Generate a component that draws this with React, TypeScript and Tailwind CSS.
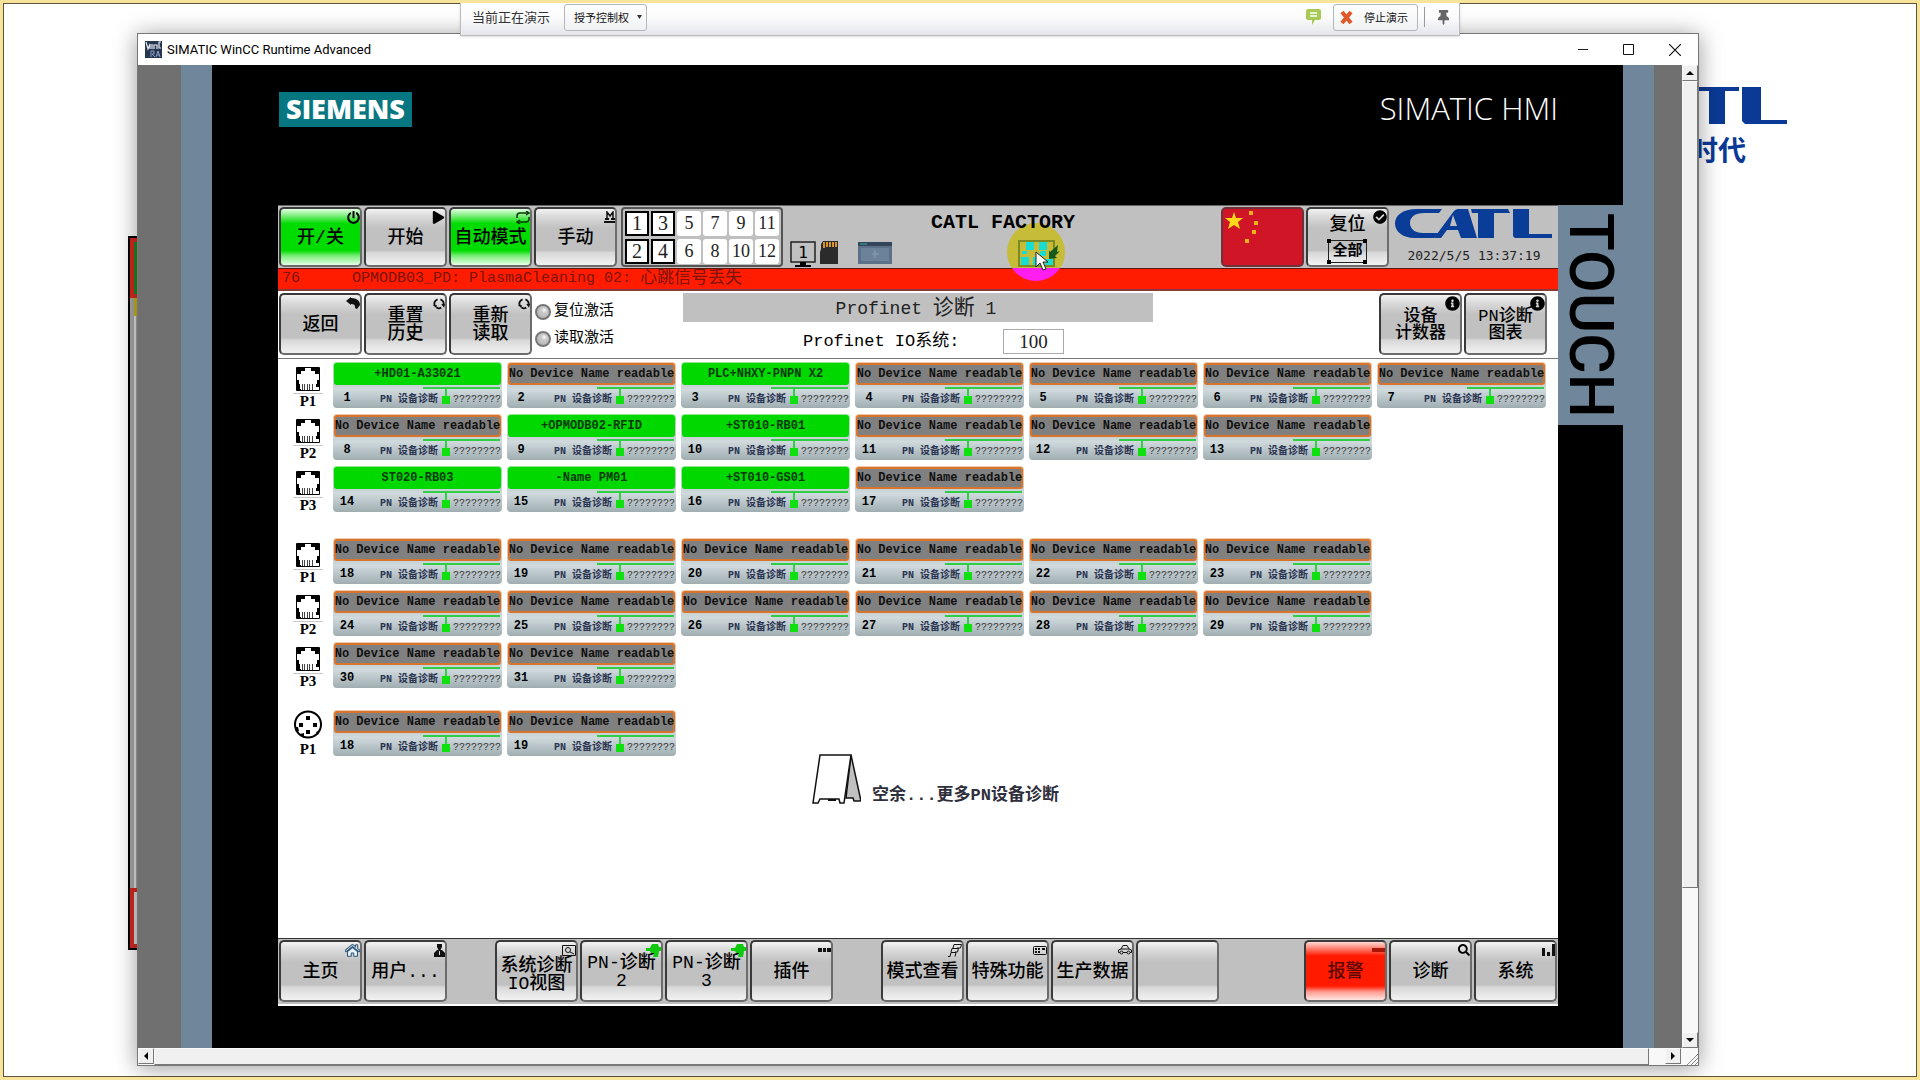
import type { ReactNode } from "react";
import { clsx } from "clsx";
import { FaPowerOff, FaPlay, FaSearch, FaCheckCircle, FaInfoCircle, FaThumbtack, FaHome } from "react-icons/fa";

const EMPTY = "No Device Name readable";

type Row = { port: string; first: number; names: string[]; round?: boolean };

const groups: Row[][] = [
  [
    { port: "P1", first: 1, names: ["+HD01-A33021", EMPTY, "PLC+NHXY-PNPN X2", EMPTY, EMPTY, EMPTY, EMPTY] },
    { port: "P2", first: 8, names: [EMPTY, "+OPMODB02-RFID", "+ST010-RB01", EMPTY, EMPTY, EMPTY] },
    { port: "P3", first: 14, names: ["ST020-RB03", "-Name PM01", "+ST010-GS01", EMPTY] },
  ],
  [
    { port: "P1", first: 18, names: [EMPTY, EMPTY, EMPTY, EMPTY, EMPTY, EMPTY] },
    { port: "P2", first: 24, names: [EMPTY, EMPTY, EMPTY, EMPTY, EMPTY, EMPTY] },
    { port: "P3", first: 30, names: [EMPTY, EMPTY] },
  ],
  [{ port: "P1", first: 18, names: [EMPTY, EMPTY], round: true }],
];

const stations = [1, 3, 5, 7, 9, 11, 2, 4, 6, 8, 10, 12];

const tones = {
  gray: "bg-[linear-gradient(#f2f2f2,#dcdcdc_12%,#c1c1c1_34%,#c1c1c1_74%,#d8d8d8_78%,#f2f2f2)]",
  green: "bg-[linear-gradient(#e4ffe4,#7cee7c_12%,#00dc00_26%,#00dc00_74%,#7cee7c_84%,#e8ffe8)]",
  red: "bg-[linear-gradient(#ffd9d4,#ff8a7c_10%,#ff1a00_24%,#ff1a00_76%,#ff9d92_86%,#ffe6e2)]",
};

type KeyProps = { children?: ReactNode; icon?: ReactNode; tone?: keyof typeof tones; small?: boolean; label?: string };

const Key = ({ children, icon, tone = "gray", small, label }: KeyProps) => (
  <button
    aria-label={label}
    className={clsx(
      "relative flex h-full w-[83px] shrink-0 flex-col items-center justify-center whitespace-nowrap rounded-[5px] border-2 border-[#3a3a3a] border-r-[#6c6c6c] border-b-[#6c6c6c] pt-[2px] text-center font-medium text-black",
      small ? "text-[17px] leading-[17px]" : "text-[18px] leading-[18px]",
      tones[tone]
    )}
  >
    {children}
    {icon && <span className="absolute right-0 top-0 flex h-4 items-center justify-end">{icon}</span>}
  </button>
);

const LoopIcon = () => (
  <svg width="14" height="13" viewBox="0 0 14 13" fill="none" stroke="#0a3a0a" strokeWidth="1.5">
    <path d="M1 7V5q0-3 3-3h9M13 6v2q0 3-3 3H1" />
    <path d="M10 0l3 2-3 2M4 9l-3 2 3 2" />
  </svg>
);

const ResetIcon = () => (
  <svg width="12" height="13" viewBox="0 0 13 13" fill="none" stroke="#111" strokeWidth="2">
    <path d="M2 9A5 5 0 0 1 5 2M8 2a5 5 0 0 1 3 7M9 11a5 5 0 0 1-5 0" />
    <path d="M0 8h4v4zM9 7h4l-1 4z" fill="#111" stroke="none" />
  </svg>
);

const BackIcon = () => (
  <svg width="14" height="12" viewBox="0 0 14 12">
    <path d="M0 4L5 0v1c6 0 9 3 9 7l-3 4c-1 0-2-1-2-2 0-2-1-3-4-3v1z" fill="#111" />
  </svg>
);

const ManualIcon = () => (
  <svg width="11" height="12" viewBox="0 0 11 12" fill="none" stroke="#111">
    <path d="M3 8V1l3 4 3-4v7" strokeWidth="1.500" />
    <path d="M1 8h4M7 8h4M0 11h11" strokeWidth="2" />
  </svg>
);

const NetIcon = () => (
  <svg width="15" height="13" viewBox="0 0 15 13" fill="#10c810">
    <path d="M0 4h4l2-4h6l1 3h2v4h-2l-1 6H7l1-4H5L4 7H0z" />
  </svg>
);

const UserIcon = () => (
  <svg width="11" height="13" viewBox="0 0 11 13" fill="#111">
    <path d="M3 0h5v3L6.500 6H8l3 3v4H0V9l3-3h1.500L3 3z" />
    <path d="M5 7h1v4H5z" fill="#ddd" />
  </svg>
);

const ViewIcon = () => (
  <svg width="14" height="11" viewBox="0 0 14 11" fill="none" stroke="#111">
    <path d="M.5.5h13v10H.5zM8 7l4 2" />
    <circle cx="6" cy="5" r="2.5" />
  </svg>
);

const DotsIcon = () => (
  <svg width="13" height="4" viewBox="0 0 13 4" fill="#111">
    <path d="M0 0h4v4H0zM5 0h3v4H5zM9 0h4v4H9z" />
  </svg>
);

const LayersIcon = () => (
  <svg width="14" height="13" viewBox="0 0 14 13" fill="none" stroke="#111">
    <path d="M5 4L6 .5h7.500L12.500 4H9M3 8l1-3.500h6.500l-1 3.500H7M0 12.500h2L3 8.500h5l-1 4" />
  </svg>
);

const PadIcon = () => (
  <svg width="14" height="9" viewBox="0 0 14 9" fill="none" stroke="#111">
    <rect x=".5" y=".5" width="13" height="8" rx="1" />
    <path d="M2 3h2m1 0h2m2 0h3M2 6h2m1 0h2" strokeWidth="2" />
  </svg>
);

const CarIcon = () => (
  <svg width="14" height="10" viewBox="0 0 14 10" fill="none" stroke="#111">
    <path d="M2 7.500H.5V5L3 4l2-3.500h4L11 4l2.500 1v2.500H12M5 7.500h4M3 4h8" />
    <circle cx="3.500" cy="7.500" r="1.500" />
    <circle cx="10.500" cy="7.500" r="1.500" />
  </svg>
);

const BarsIcon = () => (
  <svg width="13" height="12" viewBox="0 0 13 12" fill="#111">
    <path d="M0 4h3v8H0zM5 8h3v4H5zM10 0h3v12h-3z" />
  </svg>
);

const CatlLogo = () => (
  <svg width="158" height="29" viewBox="0 0 158 29" fill="#0a3d97" role="img" aria-label="CATL">
    <path d="M47 0H22C7 0 0 7 0 14.500S7 29 20 29h19l5-5H28c-8 0-13-4-13-10S20 4 29 4h15z" />
    <path fillRule="evenodd" d="M39 29L59 2q2-2 4-2h10l9 29H66l-3-8H52l-6 8zM55 17h7l-4-11z" />
    <path d="M76 0h37l2 4h-16v25H83V4h-6z" />
    <path d="M118 0h16v25h23v4h-36q-3 0-3-3z" />
  </svg>
);

const Rj45 = () => (
  <svg width="24" height="24" viewBox="0 0 24 24" fill="#000">
    <path d="M.5.5h23v23H.5z" fill="#fff" stroke="#000" />
    <path d="M1 1h8v3H5v3H1zM15 1h8v6h-4V4h-4zM1 13h2v4h1v5h1v1H1zM23 13h-2v4h-1v3h3z" />
    <path d="M6.500 17v6M8.500 17v6M11.500 17v6M13.500 17v6M16.500 17v6" stroke="#444" />
  </svg>
);

const M12 = () => (
  <svg width="30" height="29" viewBox="0 0 30 29">
    <circle cx="15" cy="14.500" r="13" fill="#fff" stroke="#000" strokeWidth="2" />
    <path d="M13 6h4v4h-4zM6 13h4v4H6zM20 13h4v4h-4zM13 20h4v4h-4zM2 17h3l1 4-3 1zM7 24l4-1v5zM23 22l4-2-2 5z" />
  </svg>
);

const Tile = ({ no, name }: { no: number; name: string }) => {
  const empty = name === EMPTY;
  return (
    <div className={clsx("flex h-full w-[169px] shrink-0 flex-col rounded-[4px] p-px", empty ? "bg-[linear-gradient(#f0c8a4,#c4ced1_45%,#d0dadd_60%,#9fadb1)]" : "bg-[linear-gradient(#8ee88e,#c4ced1_45%,#d0dadd_60%,#9fadb1)]")}>
      <div
        className={clsx(
          "flex h-[22px] items-center justify-center whitespace-nowrap rounded-[3px] border-2 text-[12px] font-bold leading-none",
          empty ? "border-[#d8742c] bg-[#808080] text-[#101010]" : "border-[#00d800] bg-[#00d800] text-[#06380a]"
        )}
      >
        {name}
      </div>
      <div className="flex flex-1 items-end pb-px">
        <span className="w-[26px] pb-[2px] text-center text-[12px] font-bold leading-[12px]">{no}</span>
        <span className="ml-auto whitespace-pre text-[10px] font-bold leading-[12px] text-[#2a3352]">PN 设备诊断</span>
        <svg width="78" height="18" viewBox="0 0 78 18" className="-ml-[15px] -mr-[48px] mb-[2px] shrink-0" fill="none">
          <path d="M0 2h77M23 2v8" stroke="#2fcf45" strokeWidth="2" />
          <path d="M19 10h8v8h-8z" fill="#10e010" />
        </svg>
        <span className="text-[10px] leading-[12px] text-[#333]">????????</span>
      </div>
    </div>
  );
};

const PortRow = ({ row }: { row: Row }) => (
  <div className="flex h-[46px] gap-[5px]">
    <div className="mr-[5px] flex w-[30px] shrink-0 flex-col items-center justify-between font-['Liberation_Serif',serif]">
      {row.round ? (
        <M12 />
      ) : (
        <div className="flex w-full justify-center border-b border-[#c8c8c8] pb-[2px] pt-[5px]">
          <Rj45 />
        </div>
      )}
      <span className="text-[15px] font-bold leading-[14px]">{row.port}</span>
    </div>
    {row.names.map((name, i) => (
      <Tile key={i} no={row.first + i} name={name} />
    ))}
  </div>
);

const ShareBar = () => (
  <div className="absolute -top-[3px] left-[457px] right-[457px] z-20 flex h-[36px] items-center border border-[#b9bbc0] bg-[linear-gradient(#ffffff,#fbfbfc_50%,#e4e6ea)] pb-[2px] pl-[11px] pr-[8px] font-['Noto_Sans_CJK_SC',sans-serif] text-[#333] shadow-sm">
    <span className="text-[13px]">当前正在演示</span>
    <button className="ml-[14px] flex h-[27px] w-[83px] items-center justify-end gap-2 rounded-[3px] border border-[#b4b6bb] bg-[linear-gradient(#ffffff,#f0f1f3)] pr-1 text-[11px] text-[#111]">
      授予控制权
      <svg width="5" height="4" viewBox="0 0 5 4" fill="#333"><path d="M0 0h5L2.500 4z" /></svg>
    </button>
    <button aria-label="聊天" className="ml-auto">
      <svg width="15" height="16" viewBox="0 0 15 16">
        <path d="M2 0h11q2 0 2 2v7q0 2-2 2H9l-3 5v-5H2q-2 0-2-2V2q0-2 2-2z" fill="#a8c954" />
        <path d="M4 4h7M4 7h7" stroke="#fff" strokeWidth="1.500" />
      </svg>
    </button>
    <button className="ml-[12px] flex h-[27px] w-[85px] items-center gap-[11px] rounded-[3px] border border-[#b4b6bb] bg-[linear-gradient(#ffffff,#f0f1f3)] pl-[6px] text-[11px] text-[#111]">
      <svg width="13" height="13" viewBox="0 0 13 13" fill="none" stroke="#e0582a" strokeWidth="4"><path d="M2 1l9 11M11 1L2 12" /></svg>
      停止演示
    </button>
    <span className="ml-[6px] h-5 w-px bg-[#9a9a9a]" />
    <button aria-label="固定" className="ml-[11px] text-[#666]">
      <FaThumbtack size={15} />
    </button>
  </div>
);

const TitleBar = () => (
  <div className="flex h-[31px] shrink-0 items-center bg-white pl-[7px] pr-[17px] text-black">
    <svg width="17" height="17" viewBox="0 0 17 17">
      <path d="M0 0h17v17H0z" fill="#26364f" />
      <path d="M1 1l2 7 2-5v5M7 3v5M9 8V4h3v4M16 1h-2v6h2" stroke="#e6ecf5" strokeWidth="1.200" fill="none" />
      <path d="M6 16v-6h3v3H7l3 3M11 16l2-6 2 6M12 14h3" stroke="#8d9cc4" fill="none" />
    </svg>
    <span className="ml-[5px] font-['Roboto',sans-serif] text-[13px]">SIMATIC WinCC Runtime Advanced</span>
    <div className="ml-auto flex items-center gap-[35px]">
      <button aria-label="Minimize"><svg width="10" height="11" viewBox="0 0 10 11" stroke="#222"><path d="M0 5.500h10" /></svg></button>
      <button aria-label="Maximize"><svg width="11" height="11" viewBox="0 0 11 11" fill="none" stroke="#111"><path d="M.5.5h10v10H.5z" /></svg></button>
      <button aria-label="Close"><svg width="12" height="12" viewBox="0 0 12 12" stroke="#111" strokeWidth="1.200"><path d="M0 0l12 12M12 0L0 12" /></svg></button>
    </div>
  </div>
);

const Arrow = ({ d, label }: { d: string; label: string }) => (
  <button aria-label={label} className="flex size-4 shrink-0 items-center justify-center border border-[#fafafa] border-b-[#777] border-r-[#777] bg-[#f0f0f0]">
    <svg width="8" height="8" viewBox="0 0 8 8"><path d={d} /></svg>
  </button>
);

const Cursor = () => (
  <svg width="58" height="58" viewBox="0 0 58 58" className="absolute left-[729px] top-[17px]">
    <defs>
      <linearGradient id="spot" x1="0" y1="0" x2="0" y2="1">
        <stop offset=".78" stopColor="#c6bc38" />
        <stop offset=".78" stopColor="#ff1ef0" />
      </linearGradient>
    </defs>
    <circle cx="29" cy="29" r="29" fill="url(#spot)" />
    <path d="M12 18h35v25H12z" fill="none" stroke="#7c8a24" strokeWidth="2" />
    <path d="M19 19h8v8h-8zM32 19h8v8h-8zM14 34h8v8h-8zM26 34h8v8h-8zM38 36h8v6h-8zM15 28h5v3h-5zM33 28h6v5h-6z" fill="#19dcd2" />
    <path d="M51 22l-8 7-1-2v9l8-1-2-2 5-5-3 1z" fill="#155a1c" />
    <path d="M29 29v15l4-4 3 7 3-1-3-7h5z" fill="#fff" stroke="#222" />
  </svg>
);

const TopBar = () => (
  <div className="relative flex h-[63px] shrink-0 items-start border-t border-[#666] bg-[#c0c0c0] py-px pl-px">
    <Cursor />
    <div className="flex h-[60px] gap-[2px]">
      <Key tone="green" icon={<FaPowerOff size={13} />}>开/关</Key>
      <Key icon={<FaPlay size={13} />}>开始</Key>
      <Key tone="green" icon={<LoopIcon />}>自动模式</Key>
      <Key icon={<ManualIcon />}>手动</Key>
    </div>
    <div className="ml-1 grid h-[60px] w-[162px] grid-cols-6 content-center gap-x-[2px] gap-y-[3px] rounded-[4px] border-2 border-[#555] px-[2px] font-['Liberation_Serif',serif] text-[18px] text-[#222]">
      {stations.map((n) => (
        <span key={n} className={clsx("flex h-[25px] items-center justify-center bg-white", n < 5 ? "border-2 border-black text-[20px]" : "rounded-[3px]")}>
          {n}
        </span>
      ))}
    </div>
    <div className="ml-[7px] flex h-[60px] items-end">
      <svg width="26" height="26" viewBox="0 0 26 26">
        <path d="M1 1h24v20H1z" fill="none" stroke="#222" strokeWidth="1.500" />
        <path d="M10 21h6v3h5v2H5v-2h5z" />
        <text x="13" y="17" textAnchor="middle" fontSize="16" fontFamily="DejaVu Sans Mono">1</text>
      </svg>
      <svg width="18" height="23" viewBox="0 0 18 23" className="mb-[3px] ml-[4px]">
        <path d="M3 0h15v23H0V11l1-3V3z" fill="#2b2b2b" />
        <path d="M4 1v6M7 1v5M10 1v5M13 1v5M16 1v5" stroke="#d89428" strokeWidth="2" />
      </svg>
      <svg width="34" height="22" viewBox="0 0 34 22" className="mb-[3px] ml-5">
        <path d="M0 0h34v22H0z" fill="#5c7188" />
        <path d="M0 0h34v4H0z" fill="#33465a" />
        <path d="M2 2h7" stroke="#2ea7a0" />
        <path d="M3 6h28v13H3z" fill="#6b8299" />
        <path d="M14 12h7M17 8v8" stroke="#8ba0b4" />
      </svg>
    </div>
    <h1 className="relative ml-[39px] pt-[2px] text-[20px] font-bold leading-[28px]">CATL FACTORY</h1>
    <div className="ml-auto flex h-[60px] gap-[2px]">
      <svg width="83" height="60" viewBox="0 0 83 60" role="img" aria-label="中国">
        <rect x="1" y="1" width="81" height="58" rx="4" fill="#d01626" stroke="#70303a" strokeWidth="2" />
        <path d="M13 5l2 6h7l-5 4 2 7-6-4-6 4 2-7-5-4h7z" fill="#ffd91a" />
        <path d="M28 4h4v4h-4zM33 14h4v4h-4zM31 23h4v4h-4zM24 32h4v4h-4z" fill="#f6b01c" />
      </svg>
      <Key icon={<FaCheckCircle size={14} />}>
        <span className="pb-[6px] pt-[3px]">复位</span>
        <span className="relative border border-[#222] px-[3px] py-[2px] text-[15px] font-bold leading-[17px]">
          全部
          <svg className="absolute -inset-[2px] h-[25px] w-[40px]" viewBox="0 0 40 25">
            <path d="M0 0h4v4H0zM36 0h4v4h-4zM0 21h4v4H0zM36 21h4v4h-4z" />
          </svg>
        </span>
      </Key>
    </div>
    <div className="ml-[6px] flex flex-col items-center gap-[10px] pr-[5px] pt-[2px]">
      <CatlLogo />
      <time className="font-['DejaVu_Sans_Mono',monospace] text-[13px] leading-4 text-[#222]">2022/5/5 13:37:19</time>
    </div>
  </div>
);

const SubBar = () => (
  <div className="flex h-[68px] shrink-0 items-start border-b border-[#777] bg-white pl-px pt-[2px]">
    <div className="flex h-[62px] gap-[2px]">
      <Key icon={<BackIcon />}>返回</Key>
      <Key icon={<ResetIcon />}>重置<br />历史</Key>
      <Key icon={<ResetIcon />}>重新<br />读取</Key>
    </div>
    <div className="ml-[3px] flex flex-col gap-[7px] pt-[9px] text-[15px] leading-5">
      {["复位激活", "读取激活"].map((t) => (
        <div key={t} className="flex items-center gap-[3px]">
          <span className="size-4 rounded-full border-2 border-[#777] bg-[radial-gradient(circle_at_60%_35%,#fff,#ccc_25%,#aaa)]" />
          {t}
        </div>
      ))}
    </div>
    <div className="ml-[69px] w-[470px]">
      <h2 className="flex h-[29px] items-center justify-center whitespace-pre bg-[#c0c0c0] pr-1 pt-[3px] text-[18px] text-[#222]">
        Profinet <span className="text-[21px] leading-[26px]">诊断</span> 1
      </h2>
      <div className="flex items-center pl-[120px] pt-[7px] text-[17px]">
        <label htmlFor="io" className="w-[200px] whitespace-nowrap">Profinet IO系统:</label>
        <input id="io" defaultValue="100" className="h-[25px] w-[61px] border border-[#aaa] bg-white text-center font-['Liberation_Serif',serif] text-[19px] text-[#222]" />
      </div>
    </div>
    <div className="ml-auto flex h-[62px] gap-[2px] pr-[11px]">
      <Key small icon={<FaInfoCircle size={15} />}>设备<br />计数器</Key>
      <Key small icon={<FaInfoCircle size={15} />}>PN诊断<br />图表</Key>
    </div>
  </div>
);

const Footer = () => (
  <div className="mt-auto flex h-[68px] shrink-0 border-b-2 border-t border-b-white border-t-[#333] bg-[#c0c0c0] py-px pl-px pr-px">
    <div className="flex h-[62px] gap-[2px]">
      <Key icon={<FaHome size={15} className="fill-[#e8f2fa] stroke-[#31587a] stroke-[40px]" />}>主页</Key>
      <Key icon={<UserIcon />}>用户...</Key>
    </div>
    <div className="ml-12 flex h-[62px] gap-[2px]">
      <Key icon={<ViewIcon />}><span className="pt-[5px]">系统诊断<br />IO视图</span></Key>
      <Key icon={<NetIcon />}>PN-诊断<br />2</Key>
      <Key icon={<NetIcon />}>PN-诊断<br />3</Key>
      <Key icon={<DotsIcon />}>插件</Key>
    </div>
    <div className="ml-12 flex h-[62px] gap-[2px]">
      <Key icon={<LayersIcon />}>模式查看</Key>
      <Key icon={<PadIcon />}>特殊功能</Key>
      <Key icon={<CarIcon />}>生产数据</Key>
      <Key label="备用" />
    </div>
    <div className="ml-auto flex h-[62px] gap-[2px]">
      <Key tone="red" icon={<span className="h-1 w-[13px] bg-[#a81408]" />}><span className="text-[#5a0800]">报警</span></Key>
      <Key icon={<FaSearch size={12} />}>诊断</Key>
      <Key icon={<BarsIcon />}>系统</Key>
    </div>
  </div>
);

const Screen = () => (
  <main className="flex min-w-0 flex-1 flex-col bg-white font-['Liberation_Mono','Noto_Sans_CJK_SC',monospace] text-black">
    <TopBar />
    <div className="flex h-[23px] shrink-0 items-start whitespace-pre border-b-2 border-t border-b-[#8a3a32] border-t-[#5a1a10] bg-[#ff1c00] pl-1 text-[15px] leading-[20px] text-[#7c1408]">
      <span className="w-[70px]">76</span>
      OPMODB03_PD: PlasmaCleaning 02: <span className="text-[17px]">心跳信号丢失</span>
    </div>
    <SubBar />
    <div className="flex flex-col pl-[15px] pt-[3px]">
      {groups.map((rows, g) => (
        <div key={g} className={clsx("flex flex-col gap-[6px]", g === 1 && "mt-[26px]", g === 2 && "mt-[22px]")}>
          {rows.map((row) => (
            <PortRow key={row.port} row={row} />
          ))}
        </div>
      ))}
    </div>
    <a href="#more" className="-mt-[2px] ml-[534px] flex items-end gap-[11px] self-start text-[17px] font-bold leading-4 text-[#30303c]">
      <svg width="49" height="50" viewBox="0 0 49 50" stroke="#111" strokeWidth="1.500">
        <path d="M39 1L49 47h-7l-1-3h-7z" fill="#c0c0c0" />
        <path d="M8 1h31l-7 48h-4l-1-4H8l-2 4H1z" fill="#fff" />
        <path d="M16 46h8" strokeWidth="2" />
      </svg>
      <span>空余...更多PN设备诊断</span>
    </a>
    <Footer />
  </main>
);

export default function App() {
  return (
    <div className="relative flex min-h-screen flex-col overflow-hidden border-[3px] border-[#f7e39a] bg-white">
      <div className="absolute inset-0 border border-[#5c5636]" />

      {/* desktop behind the runtime window */}
      <div className="absolute left-[125px] top-[233px] flex h-[714px] w-4 flex-col border-2 border-black bg-[#a8a8a8]">
        <div className="h-[60px] border-4 border-[#d62a20] bg-[#208a20]" />
        <div className="ml-1 h-[18px] bg-[#c9b41c]" />
        <div className="ml-1 flex-1 border-l-2 border-[#e4e4e4]" />
        <div className="h-[60px] border-4 border-[#d62a20] bg-[#ddd]" />
      </div>
      <div className="absolute right-[130px] top-[84px]">
        <svg width="97" height="37" viewBox="0 0 97 37" fill="#0a3a96">
          <path d="M0 0h49v4H35v33H19V4H0zM52 0h19v33h26v4H55l-3-3z" />
        </svg>
        <span className="block font-['Noto_Sans_CJK_SC',sans-serif] text-[28px] font-bold leading-[50px] text-[#0a3a96]">时代</span>
      </div>

      <ShareBar />

      <div className="relative mb-[11px] ml-[134px] mr-[218px] mt-[30px] flex flex-1 flex-col border border-[#777] shadow-[0_2px_22px_rgba(0,0,0,0.4)]">
        <TitleBar />
        <div className="flex flex-1">
          <div className="flex flex-1 bg-[#707070] pl-[43px] pr-[28px]">
            <div className="flex flex-1 bg-[#70879b] px-[31px]">
              <div className="flex flex-1 flex-col bg-black">
                <header className="flex h-[140px] shrink-0 items-start justify-between pl-[67px] pr-[65px] pt-[27px]">
                  <div className="flex h-[35px] w-[133px] items-center justify-center bg-[#067680] pb-[2px] font-['Open_Sans',sans-serif] text-[27px] font-extrabold leading-none text-white">SIEMENS</div>
                  <div className="font-['Open_Sans',sans-serif] text-[31px] font-light leading-[33px] text-white">SIMATIC HMI</div>
                </header>
                <div className="flex flex-1 pl-[66px]">
                  <Screen />
                  <div className="flex h-[220px] w-[65px] items-center justify-center bg-[#70879b] font-['Roboto',sans-serif] text-[62px] font-medium leading-[64px] text-black [writing-mode:vertical-rl]">
                    TOUCH
                  </div>
                </div>
                <div className="h-[42px] shrink-0" />
              </div>
            </div>
          </div>
          <div className="flex w-4 shrink-0 flex-col bg-[#f8f8f8]">
            <Arrow label="Scroll up" d="M0 6h8L4 2z" />
            <div className="h-[807px] border border-[#fafafa] border-b-[#777] border-r-[#777] bg-[#f0f0f0]" />
            <div className="flex-1" />
            <Arrow label="Scroll down" d="M0 2h8L4 6z" />
          </div>
        </div>
        <div className="flex h-[17px] shrink-0 bg-[#f8f8f8]">
          <Arrow label="Scroll left" d="M6 0v8L2 4z" />
          <div className="flex-1 border border-[#fafafa] border-b-[#777] border-r-[#777] bg-[#f0f0f0]" />
          <div className="w-4" />
          <Arrow label="Scroll right" d="M2 0v8l4-4z" />
          <svg width="17" height="17" viewBox="0 0 17 17" stroke="#888"><path d="M6 17L17 6M10 17l7-7M14 17l3-3" /></svg>
        </div>
      </div>
    </div>
  );
}
